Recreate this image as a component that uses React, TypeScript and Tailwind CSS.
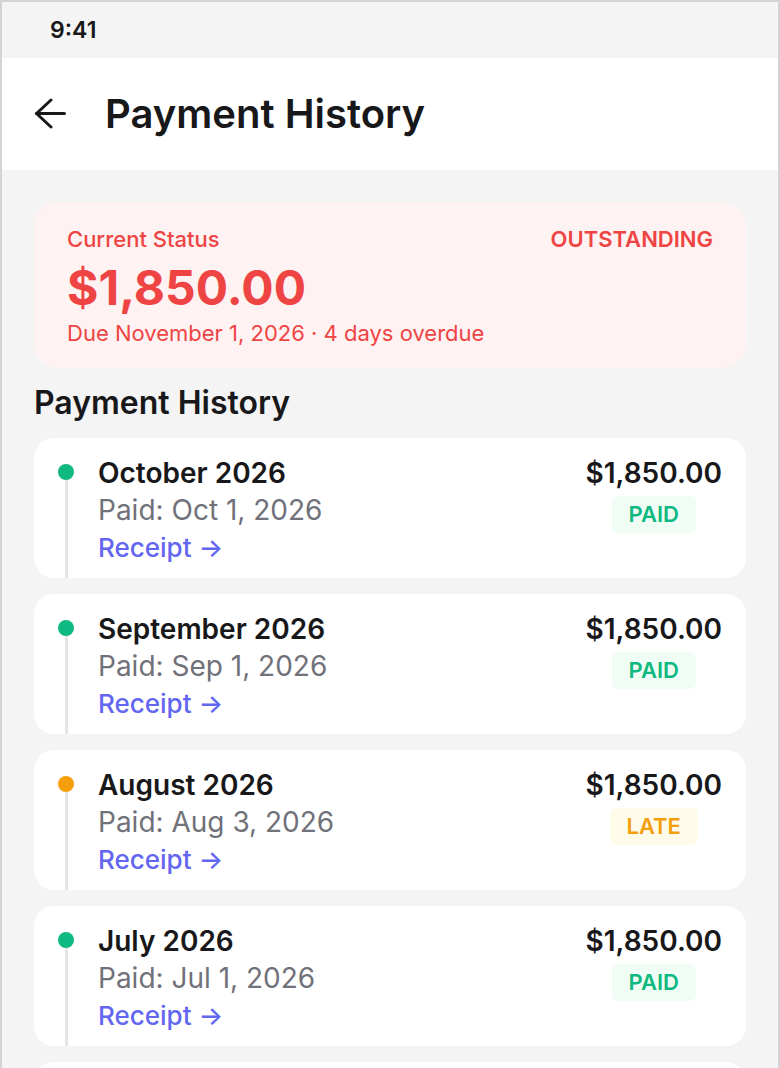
const payments = [
  { id: 1, month: 'October 2026', paid: 'Paid: Oct 1, 2026', amount: '$1,850.00', status: 'PAID' },
  { id: 2, month: 'September 2026', paid: 'Paid: Sep 1, 2026', amount: '$1,850.00', status: 'PAID' },
  { id: 3, month: 'August 2026', paid: 'Paid: Aug 3, 2026', amount: '$1,850.00', status: 'LATE' },
  { id: 4, month: 'July 2026', paid: 'Paid: Jul 1, 2026', amount: '$1,850.00', status: 'PAID' },
  { id: 5, month: 'June 2026', paid: 'Paid: Jun 1, 2026', amount: '$1,850.00', status: 'PAID' },
];

export default function App() {
  return (
    <div
      className="w-[780px] h-[1068px] overflow-hidden border-x-2 border-t-2 border-[#d4d4d8] bg-[#f4f4f4] text-[#18181b]"
      style={{ fontFamily: 'Inter, "Noto Sans", sans-serif' }}
    >
      {/* status bar */}
      <div className="h-14 flex items-center pl-12 text-[23px] font-semibold">9:41</div>

      {/* header */}
      <div className="h-28 bg-white flex items-center pl-8 gap-[39px]">
        <svg width="32" height="32" viewBox="0 0 32 32" fill="none" stroke="#18181b" strokeWidth="3" strokeLinecap="round" strokeLinejoin="round">
          <path d="M30.5 15.5H2.5" />
          <path d="M17 2L2.5 15.5L17 29" />
        </svg>
        <h1 className="text-[40px] leading-[48px] font-semibold">Payment History</h1>
      </div>

      <div className="px-8 pt-8">
        {/* current status */}
        <div className="bg-[#fef2f2] rounded-3xl px-[33px] pt-[23px] pb-[21px] text-[#ef4444]">
          <div className="flex justify-between text-[22px] leading-7 font-medium">
            <span>Current Status</span>
            <span className="font-semibold">OUTSTANDING</span>
          </div>
          <div className="mt-[11px] text-[48px] leading-[48px] font-bold">$1,850.00</div>
          <div className="mt-[7px] text-[22px] leading-7">Due November 1, 2026 · 4 days overdue</div>
        </div>

        <h2 className="mt-[15px] mb-[15px] text-[32px] leading-10 font-semibold">Payment History</h2>

        <div className="flex flex-col gap-4">
          {payments.map(p => (
            <div key={p.id} className="bg-white rounded-[20px] h-[140px] shrink-0 flex pl-6 pr-6">
              <div className="w-4 flex flex-col items-center pt-[26px]">
                <div className={`w-4 h-4 rounded-full ${p.status === 'LATE' ? 'bg-[#f59e0b]' : 'bg-[#10b981]'}`} />
                <div className="w-[3px] flex-1 bg-[#e5e5e5]" />
              </div>
              <div className="flex-1 flex justify-between pt-[17px] pl-6">
                <div className="flex flex-col">
                  <div className="text-[28px] leading-[37px] font-semibold">{p.month}</div>
                  <div className="text-[28px] leading-[37px] text-[#71717a]">{p.paid}</div>
                  <div className="text-[26px] leading-[37px] font-medium text-[#6366f1]">Receipt →</div>
                </div>
                <div className="flex flex-col items-center">
                  <div className="text-[28px] leading-[37px] font-semibold">{p.amount}</div>
                  <div
                    className={`mt-[4px] h-[37px] flex items-center px-[17px] rounded-md text-[22px] font-semibold ${
                      p.status === 'LATE' ? 'bg-[#fffbeb] text-[#f59e0b]' : 'bg-[#f0fdf4] text-[#10b981]'
                    }`}
                  >
                    {p.status}
                  </div>
                </div>
              </div>
            </div>
          ))}
        </div>
      </div>
    </div>
  );
}
